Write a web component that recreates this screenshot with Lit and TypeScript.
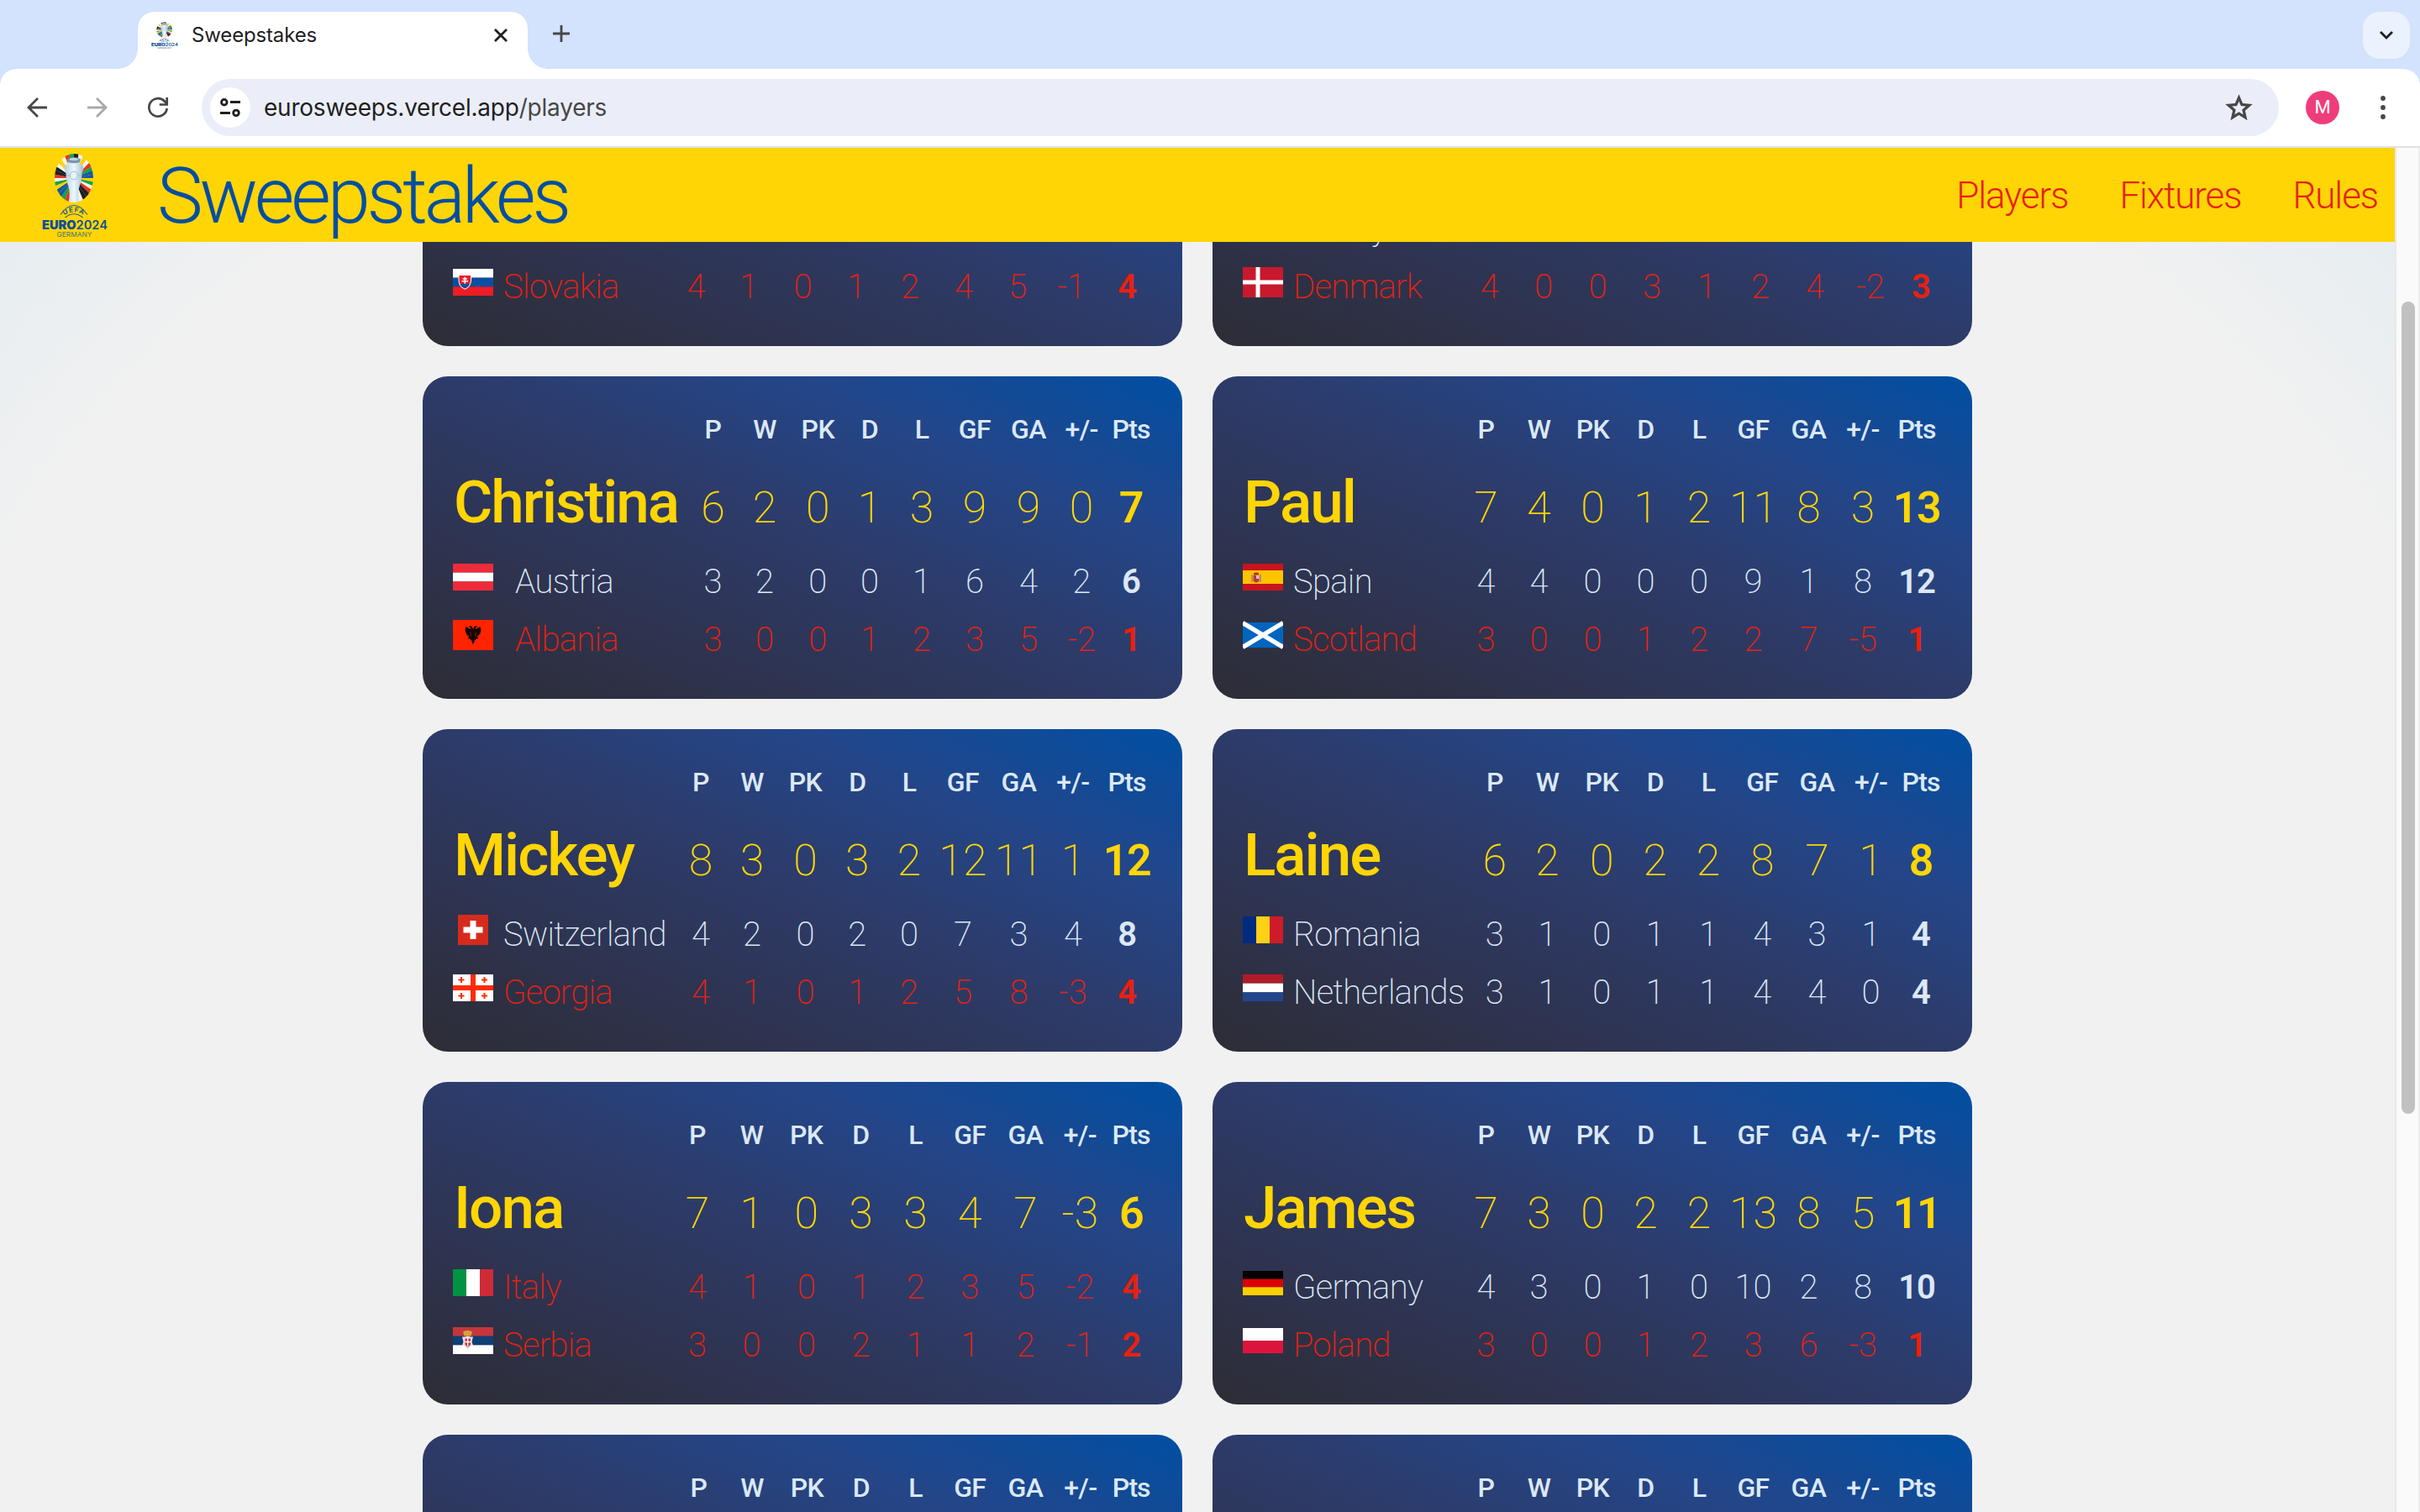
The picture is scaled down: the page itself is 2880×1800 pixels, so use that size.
import { LitElement, html, css, svg } from "lit";
import { customElement, property } from "lit/decorators.js";
import { classMap } from "lit/directives/class-map.js";
import { styleMap } from "lit/directives/style-map.js";

interface Team {
  name: string;
  flag: string;
  out: boolean;
  stats: string[];
}
interface Player {
  name: string;
  stats: string[];
  /** Centre of every figure column, measured from the card's left edge. */
  centers: number[];
  headings?: string[];
  teamX?: number;
  teams: Team[];
}

const HEADINGS = ["P", "W", "PK", "D", "L", "GF", "GA", "+/-", "Pts"];
const PAD = 36;

const team = (name: string, flag: string, stats: string, out = false): Team => ({
  name,
  flag,
  out,
  stats: stats ? stats.split(" ") : [],
});

const WIDE = [325.5, 388.5, 452.5, 515.5, 579, 643.5, 709.5, 774, 838];
const IONA = [327, 391.5, 456.7, 521.5, 586.5, 651.3, 717.5, 782.4, 843];

const PLAYERS: Player[] = [
  {
    name: "",
    stats: [],
    headings: [],
    centers: [325.5, 388, 452.5, 516, 580, 644, 708, 772, 838],
    teams: [team("", "", ""), team("Slovakia", "sk", "4 1 0 1 2 4 5 -1 4", true)],
  },
  {
    name: "",
    stats: [],
    headings: [],
    centers: [329.8, 394, 458.5, 523, 588, 652, 717, 783, 843],
    teams: [team("Turkey", "", ""), team("Denmark", "dk", "4 0 0 3 1 2 4 -2 3", true)],
  },
  {
    name: "Christina",
    stats: "6 2 0 1 3 9 9 0 7".split(" "),
    centers: [345.5, 407, 470.3, 532, 594, 657, 721, 784.2, 843],
    teamX: 14,
    teams: [
      team("Austria", "at", "3 2 0 0 1 6 4 2 6"),
      team("Albania", "al", "3 0 0 1 2 3 5 -2 1", true),
    ],
  },
  {
    name: "Paul",
    stats: "7 4 0 1 2 11 8 3 13".split(" "),
    centers: WIDE,
    teams: [
      team("Spain", "es", "4 4 0 0 0 9 1 8 12"),
      team("Scotland", "sco", "3 0 0 1 2 2 7 -5 1", true),
    ],
  },
  {
    name: "Mickey",
    stats: "8 3 0 3 2 12 11 1 12".split(" "),
    centers: [331, 392, 455.5, 517.3, 579, 643, 709.5, 774, 838],
    teams: [
      team("Switzerland", "ch", "4 2 0 2 0 7 3 4 8"),
      team("Georgia", "ge", "4 1 0 1 2 5 8 -3 4", true),
    ],
  },
  {
    name: "Laine",
    stats: "6 2 0 2 2 8 7 1 8".split(" "),
    centers: [335.8, 398.6, 463.3, 526.8, 590.2, 654.3, 719.5, 783.6, 843],
    teams: [
      team("Romania", "ro", "3 1 0 1 1 4 3 1 4"),
      team("Netherlands", "nl", "3 1 0 1 1 4 4 0 4"),
    ],
  },
  {
    name: "Iona",
    stats: "7 1 0 3 3 4 7 -3 6".split(" "),
    centers: IONA,
    teams: [
      team("Italy", "it", "4 1 0 1 2 3 5 -2 4", true),
      team("Serbia", "rs", "3 0 0 2 1 1 2 -1 2", true),
    ],
  },
  {
    name: "James",
    stats: "7 3 0 2 2 13 8 5 11".split(" "),
    centers: WIDE,
    teams: [
      team("Germany", "de", "4 3 0 1 0 10 2 8 10"),
      team("Poland", "pl", "3 0 0 1 2 3 6 -3 1", true),
    ],
  },
  { name: "", stats: [], centers: [328.5, 392, 457.5, 522, 586.5, 651.3, 717.5, 782.8, 843.2], teams: [] },
  { name: "", stats: [], centers: WIDE, teams: [] },
];

/** Grid tracks whose midpoints fall on the given centres. */
const tracks = (centers: number[]): string => {
  let width = 62;
  let edge = centers[0] - width / 2;
  const out = [edge - PAD];
  for (const c of centers) {
    width = 2 * (c - edge);
    out.push(width);
    edge += width;
  }
  return out.map((w) => `${w.toFixed(1)}px`).join(" ");
};

const bands = (w: number, h: number, colors: string[], vertical = false) => svg`
  ${colors.map((c, i) =>
    vertical
      ? svg`<rect x=${(w / colors.length) * i} y="0" width=${w / colors.length} height=${h} fill=${c}></rect>`
      : svg`<rect x="0" y=${(h / colors.length) * i} width=${w} height=${h / colors.length} fill=${c}></rect>`
  )}`;

const miniCross = (x: number, y: number) =>
  svg`<path d="M${x - 1} ${y - 3.5}h2v2.500h2.500v2h-2.500v2.500h-2v-2.500h-2.500v-2h2.500z" fill="#ff2b06"></path>`;

const FLAGS: Record<string, { w: number; h: number; art: unknown }> = {
  at: { w: 48, h: 32, art: bands(48, 32, ["#ee2b3b", "#fff", "#ee2b3b"]) },
  it: { w: 48, h: 32, art: bands(48, 32, ["#009344", "#fff", "#cf2b37"], true) },
  ro: { w: 48, h: 32, art: bands(48, 32, ["#012b80", "#fcd116", "#ce1b27"], true) },
  nl: { w: 48, h: 32, art: bands(48, 32, ["#ae1c28", "#fff", "#21468b"]) },
  de: { w: 48, h: 29, art: bands(48, 29, ["#000", "#dd0000", "#ffce00"]) },
  pl: { w: 48, h: 30, art: bands(48, 30, ["#fff", "#dc143c"]) },
  sk: {
    w: 48,
    h: 32,
    art: svg`${bands(48, 32, ["#fff", "#0b4ea2", "#ee1c25"])}
      <path d="M6.500 8h15.500c.3 8 0 13-7.700 16.800C6.500 21 6.200 16 6.500 8z" fill="#fff"></path>
      <path d="M7.500 8h13.500c.2 8 0 12.300-6.700 15.600C7.500 20.300 7.300 16 7.500 8z" fill="#ee1c25"></path>
      <path d="M8.800 18.500c1-1 2.200-1 3 0 1-1.800 3.600-1.800 4.800 0 .8-1 2-1 3 0-1 2.400-2.600 3.800-5.300 5.100-2.800-1.300-4.500-2.700-5.500-5.100z" fill="#0b4ea2"></path>
      <path d="M14.300 9.800v8M11.600 12h5.400M10.600 14.800h7.400" stroke="#fff" stroke-width="1.500"></path>`,
  },
  dk: {
    w: 48,
    h: 36,
    art: svg`<rect width="48" height="36" fill="#c8192e"></rect>
      <path d="M15.500 0h5v36h-5zM0 15.500h48v5H0z" fill="#fff"></path>`,
  },
  al: {
    w: 48,
    h: 36,
    art: svg`<rect width="48" height="36" fill="#ff2400"></rect>
      <path d="M24 11l-1.300-3-2.200-1-2.200 1.200 2.400.6.800 2.200-3.500-1.500-2.500-1.800-.4 3-1 1.200 1.300 1-.8 1.600 1.400.9-.6 1.900 1.900-.2-.3 2.300 2.200-1.200-.6 2.300-1 2 2.100-.6 1 1.400 1.300.7.700 2.600 1.300 2.400 1.300-2.400.7-2.600 1.300-.7 1-1.400 2.100.6-1-2-.6-2.300 2.200 1.200-.3-2.300 1.900.2-.6-1.900 1.400-.9-.8-1.600 1.300-1-1-1.200-.4-3-2.500 1.800-3.500 1.500.8-2.200 2.400-.6-2.200-1.200-2.200 1z" fill="#150703"></path>
      <path d="M20.800 14.500l.6 5M27.200 14.500l-.6 5" stroke="#a81a04" stroke-width=".8"></path>`,
  },
  es: {
    w: 48,
    h: 32,
    art: svg`<rect width="48" height="32" fill="#c8141d"></rect>
      <rect y="8" width="48" height="16" fill="#ffc400"></rect>
      <path d="M10 13h2v9h-2zM20 13h2v9h-2z" fill="#b9906a"></path>
      <path d="M12.500 14h7v5.500q0 2.500-3.500 3-3.500-.5-3.500-3z" fill="#b83a34"></path>
      <path d="M16 14h3.500v4H16z" fill="#d9c3cf"></path>
      <path d="M13 11.500q3-2 6 0v2h-6z" fill="#a5301e"></path>`,
  },
  sco: {
    w: 48,
    h: 34,
    art: svg`<rect y="2" width="48" height="30" fill="#0065bf"></rect>
      <path d="M0 2.500L48 31.500M48 2.500L0 31.500" stroke="#fff" stroke-width="5.500"></path>`,
  },
  ch: {
    w: 36,
    h: 36,
    art: svg`<rect width="36" height="36" fill="#d52b1e"></rect>
      <path d="M14.500 7h7v7.500H29.500v7h-8V29h-7v-7.500H6.500v-7h8z" fill="#fff"></path>`,
  },
  ge: {
    w: 48,
    h: 32,
    art: svg`<rect width="48" height="32" fill="#fff"></rect>
      <path d="M21 0h6v32h-6zM0 13h48v6H0z" fill="#ff2b06"></path>
      ${miniCross(10, 6.5)}${miniCross(37.5, 6.5)}${miniCross(10, 25.5)}${miniCross(37.5, 25.5)}`,
  },
  rs: {
    w: 48,
    h: 32,
    art: svg`${bands(48, 32, ["#c6363c", "#0c4076", "#fff"])}
      <path d="M12 5.500q5.500-3.500 11 0l-1.500 5h-8z" fill="#d9a13c"></path>
      <path d="M11 11.500h3l3.500-1 3.500 1h3l-1.500 6 1.500 4-3 1-3.500 4-3.500-4-3-1 1.500-4z" fill="#f0dfe2"></path>
      <path d="M14.500 13.500h6.500v7.500l-3.200 3-3.300-3z" fill="#c6363c"></path>
      <path d="M17.700 13v10M14.500 17.500h6.500" stroke="#fff" stroke-width="1.300"></path>`,
  },
};

const flag = (code: string) => {
  const f = FLAGS[code];
  return f ? html`<svg width=${f.w} height=${f.h} viewBox="0 0 ${f.w} ${f.h}">${f.art}</svg>` : "";
};

const RAYS = ["#1d1d2b", "#ffd400", "#f4f4f0", "#e3342b", "#1458a6", "#f4f4f0", "#12a351", "#e3342b", "#1d1d2b", "#1458a6", "#ffd400", "#f4f4f0", "#12a351"];

const sector = (i: number, n: number) => {
  const p = (k: number) => {
    const a = (k / n) * Math.PI * 2 - Math.PI / 2;
    return `${(38 + 60 * Math.cos(a)).toFixed(2)} ${(30 + 60 * Math.sin(a)).toFixed(2)}`;
  };
  return svg`<path d="M38 30L${p(i)}L${p(i + 1)}z" fill=${RAYS[(i * 5) % RAYS.length]}></path>`;
};

/** Tournament emblem: trophy on a ray-filled oval above the wordmark. */
const emblem = (size: string) => html`
  <svg class=${size} viewBox="0 0 78 101" preserveAspectRatio="none">
    <defs>
      <clipPath id="oval"><ellipse cx="38" cy="30" rx="23" ry="29"></ellipse></clipPath>
      <linearGradient id="silver" x1="0" x2="1">
        <stop offset="0" stop-color="#b4cfde"></stop>
        <stop offset=".5" stop-color="#eef7fb"></stop>
        <stop offset="1" stop-color="#9dbfd4"></stop>
      </linearGradient>
    </defs>
    <g clip-path="url(#oval)">
      ${Array.from({ length: 32 }, (_, i) => sector(i, 32))}
      <path d="M31 8q7-4 14 0l.5 5.500q5 1 3.500 7-1 1-1.500 3.500 0 9-3 16-2.500 8 0 19.500h-13q2.500-11.500 0-19.500-3-7-3-16-.5-2.500-1.500-3.500-1.500-6 3.500-7z" fill="url(#silver)"></path>
      <path d="M30 7.500q8-4.500 16 0l-1 3.500q-7 2.500-14 0z" fill="#6f97ae"></path>
      <path d="M32.500 7q5.500-2.500 11 0l-.5 1.500q-5 1.500-10 0z" fill="#b9d2df"></path>
      <circle cx="38" cy="27" r="4.800" fill="none" stroke="#9cc0d8" stroke-width="1"></circle>
      <path d="M28.500 27h4.500M43 27h4.500" stroke="#9cc0d8" stroke-width="1"></path>
    </g>
    <path d="M22 73.500q16-22 32 0M27.500 77q10.500-8.500 21 0" fill="none" stroke="#2a6089" stroke-width="1.200"></path>
    <path id="arc" d="M22 78q16-15 32 0" fill="none"></path>
    <text class="uefa"><textPath href="#arc" startOffset="50%" text-anchor="middle">UEFA</textPath></text>
    <text class="euro" x="39" y="90.500" text-anchor="middle" textLength="78" lengthAdjust="spacingAndGlyphs"><tspan class="heavy">EURO</tspan>2024</text>
    <text class="germany" x="38.500" y="99.800" text-anchor="middle" textLength="42" lengthAdjust="spacingAndGlyphs">GERMANY</text>
  </svg>`;

@customElement("player-card")
export class PlayerCard extends LitElement {
  @property({ attribute: false }) player!: Player;

  static styles = css`
    :host {
      display: block;
      box-sizing: border-box;
      height: 384px;
      padding: 44px 0 0 36px;
      border-radius: 30px;
      overflow: hidden;
      color: #dce8f5;
      background: linear-gradient(to bottom left, #004fa3 0%, #23468a 25%, #2d3b69 50%, #2e334f 75%, #2d2d35 100%);
      font-family: Roboto, "Liberation Sans", sans-serif;
    }
    .row {
      display: grid;
      align-items: baseline;
      white-space: nowrap;
      height: 69px;
      line-height: 69px;
      font-size: 40px;
      font-weight: 200;
    }
    .cell {
      display: flex;
      justify-content: center;
    }
    .pts {
      font-weight: 650;
      letter-spacing: -0.03em;
    }
    .head {
      height: 38px;
      line-height: 38px;
      font-size: 32px;
      font-weight: 500;
      letter-spacing: -0.6px;
    }
    .head .pts {
      font-weight: 500;
    }
    .total {
      height: 108px;
      margin: 14px 0 6px;
      line-height: 108px;
      font-size: 52px;
      color: #ffd505;
    }
    .name {
      padding-left: 1px;
      font-size: 71px;
      font-weight: 500;
      letter-spacing: -2px;
    }
    .out {
      color: #e8210f;
    }
    .team {
      display: flex;
      align-items: center;
      letter-spacing: -0.7px;
    }
    .label {
      align-self: baseline;
    }
    .slot {
      display: flex;
      flex: none;
      justify-content: center;
      width: 48px;
      margin: -11px 12px 0 0;
    }
  `;

  private figures(values: string[]) {
    return values.map(
      (v, i) => html`<span class=${classMap({ cell: true, pts: i === 8 })}>${v}</span>`
    );
  }

  render() {
    const p = this.player;
    const grid = styleMap({ gridTemplateColumns: tracks(p.centers) });
    const shift = styleMap({ paddingLeft: `${p.teamX ?? 0}px` });
    return html`
      <div class="row head" style=${grid}><span></span>${this.figures(p.headings ?? HEADINGS)}</div>
      <div class="row total" style=${grid}><span class="name">${p.name}</span>${this.figures(p.stats)}</div>
      ${p.teams.map(
        (t) => html`<div class=${classMap({ row: true, out: t.out })} style=${grid}>
          <span class="team"><span class="slot">${flag(t.flag)}</span><span class="label" style=${shift}>${t.name}</span></span>
          ${this.figures(t.stats)}
        </div>`
      )}
    `;
  }
}

@customElement("app-root")
export class AppRoot extends LitElement {
  static styles = css`
    :host {
      display: flex;
      flex-direction: column;
      width: 2880px;
      height: 1800px;
      overflow: hidden;
      background: #d3e2fd;
      font-family: Inter, "Liberation Sans", sans-serif;
    }
    .strip {
      display: flex;
      flex: none;
      align-items: flex-start;
      height: 68px;
      padding: 14px 12px 0 164px;
    }
    .tab {
      position: relative;
      display: flex;
      align-items: center;
      box-sizing: border-box;
      width: 464px;
      height: 68px;
      padding: 0 22px 12px 16px;
      border-radius: 20px 20px 0 0;
      background: #fff;
      color: #1f1f1f;
      font-size: 24px;
      letter-spacing: -0.15px;
    }
    .tab::before,
    .tab::after {
      content: "";
      position: absolute;
      bottom: 0;
      width: 24px;
      height: 24px;
    }
    .tab::before {
      left: -24px;
      background: radial-gradient(circle at 0 0, transparent 23.5px, #fff 24px);
    }
    .tab::after {
      right: -24px;
      background: radial-gradient(circle at 100% 0, transparent 23.5px, #fff 24px);
    }
    .tab-title {
      flex: 1;
      padding: 0 0 1px 16px;
    }
    .favicon {
      width: 32px;
      height: 32px;
    }
    .plus {
      margin: 12px 0 0 26px;
    }
    .menu {
      display: flex;
      align-items: center;
      justify-content: center;
      width: 56px;
      height: 56px;
      margin-left: auto;
      border-radius: 20px;
      background: #ebf2fe;
    }
    .toolbar {
      display: flex;
      flex: none;
      align-items: center;
      box-sizing: border-box;
      height: 94px;
      padding: 0 39px 0 28px;
      border-radius: 20px 20px 0 0;
      border-bottom: 2px solid #dfe2e6;
      background: #fff;
    }
    .tool {
      flex: none;
      margin-right: 40px;
    }
    .omnibox {
      display: flex;
      flex: 1;
      align-items: center;
      box-sizing: border-box;
      height: 68px;
      margin-left: -4px;
      padding: 0 28px 0 10px;
      border-radius: 34px;
      background: #ebeef8;
      color: #1f1f1f;
      font-size: 28px;
      letter-spacing: -0.22px;
    }
    .site {
      display: flex;
      align-items: center;
      justify-content: center;
      width: 48px;
      height: 48px;
      margin-right: 16px;
      border-radius: 50%;
      background: #fff;
    }
    .url {
      flex: 1;
    }
    .path {
      color: #474747;
    }
    .avatar {
      width: 40px;
      height: 40px;
      margin: 0 47px 0 32px;
      border-radius: 50%;
      background: #ee3d7b;
      color: #fff;
      font: 400 22px/40px Roboto, sans-serif;
      text-align: center;
    }
    .view {
      display: flex;
      flex: 1;
      min-height: 0;
    }
    .page {
      display: flex;
      flex-direction: column;
      width: 2850px;
      background: radial-gradient(1700px 1400px at 50% 1100px, #f1f1f1 94%, #e6edf1 110%);
    }
    .bar {
      display: flex;
      flex: none;
      align-items: center;
      box-sizing: border-box;
      height: 112px;
      padding: 0 20px 0 50px;
      background: #ffd505;
      font-family: Roboto, "Liberation Sans", sans-serif;
      font-weight: 300;
    }
    .logo {
      width: 78px;
      height: 101px;
    }
    .brand {
      flex: 1;
      padding: 4px 0 0 59px;
      color: #034ea2;
      font-size: 92px;
      line-height: 106px;
      letter-spacing: -4.1px;
    }
    .links {
      display: flex;
      gap: 61px;
      padding-top: 1px;
      color: #e8210f;
      font-size: 44px;
      letter-spacing: -1.1px;
    }
    .scroller {
      display: flex;
      flex: 1;
      flex-direction: column;
      align-items: center;
      justify-content: flex-start;
      min-height: 0;
      overflow: hidden;
    }
    .grid {
      display: grid;
      flex: none;
      grid-template-columns: 904px 904px;
      gap: 36px;
      margin-top: -260px;
    }
    .track {
      box-sizing: border-box;
      width: 30px;
      padding: 183px 6px 0;
      border-left: 2px solid #e8e8e8;
      border-right: 2px solid #ededed;
      background: #fafafa;
    }
    .thumb {
      width: 16px;
      height: 967px;
      border-radius: 8px;
      background: #c1c1c1;
    }
    .uefa {
      font: 700 8px Inter, sans-serif;
      letter-spacing: 1px;
      fill: #2a6089;
    }
    .euro {
      font: 600 14.6px Inter, sans-serif;
      fill: #0b4f9b;
    }
    .heavy {
      font-weight: 900;
    }
    .germany {
      font: 400 8px Inter, sans-serif;
      fill: #4c7474;
    }
  `;

  render() {
    return html`
      <div class="strip">
        <div class="tab">
          ${emblem("favicon")}
          <span class="tab-title">Sweepstakes</span>
          <svg width="20" height="20" viewBox="0 0 20 20"><path d="M3 3l14 14M17 3L3 17" stroke="#1f1f1f" stroke-width="2.800"></path></svg>
        </div>
        <svg class="plus" width="28" height="28" viewBox="0 0 28 28"><path d="M14 4v20M4 14h20" stroke="#474747" stroke-width="2.800"></path></svg>
        <div class="menu">
          <svg width="20" height="20" viewBox="0 0 20 20"><path d="M3 6l7 7 7-7" fill="none" stroke="#1f1f1f" stroke-width="2.800"></path></svg>
        </div>
      </div>
      <div class="toolbar">
        <svg class="tool" width="32" height="32" viewBox="0 0 32 32"><path d="M28 16H6M17 5L6 16l11 11" fill="none" stroke="#474747" stroke-width="2.800"></path></svg>
        <svg class="tool" width="32" height="32" viewBox="0 0 32 32"><path d="M4 16h22M15 5l11 11-11 11" fill="none" stroke="#a9a9a9" stroke-width="2.800"></path></svg>
        <svg class="tool" width="32" height="32" viewBox="0 0 32 32"><path d="M26.700 17a10.700 10.700 0 1 1-2.900-8.500l3 3.200M26.700 4v8.500h-9" fill="none" stroke="#474747" stroke-width="2.700"></path></svg>
        <div class="omnibox">
          <div class="site">
            <svg width="26" height="24" viewBox="0 0 26 24"><g fill="none" stroke="#1f1f1f" stroke-width="2.800"><circle cx="5.800" cy="5.700" r="3.300"></circle><path d="M13 5.500h12M1 18.500h12"></path><circle cx="20" cy="18.400" r="3.300"></circle></g></svg>
          </div>
          <span class="url">eurosweeps.vercel.app<span class="path">/players</span></span>
          <svg width="39" height="39" viewBox="0 0 24 24"><path fill="#474747" d="M12 7.130l.97 2.290.47 1.110 1.200.1 2.470.21-1.880 1.630-.91.79.27 1.180.56 2.410-2.120-1.280-1.030-.64-1.030.62-2.120 1.280.56-2.410.27-1.180-.91-.79-1.880-1.630 2.470-.21 1.200-.1.470-1.110.97-2.270M12 2L9.190 8.630 2 9.240l5.460 4.730L5.820 21 12 17.270 18.180 21l-1.640-7.030L22 9.240l-7.190-.61z"></path></svg>
        </div>
        <div class="avatar">M</div>
        <svg width="10" height="32" viewBox="0 0 10 32"><g fill="#474747"><circle cx="5" cy="5" r="2.900"></circle><circle cx="5" cy="16" r="2.900"></circle><circle cx="5" cy="27" r="2.900"></circle></g></svg>
      </div>
      <div class="view">
        <div class="page">
          <div class="bar">
            ${emblem("logo")}
            <span class="brand">Sweepstakes</span>
            <div class="links"><span>Players</span><span>Fixtures</span><span>Rules</span></div>
          </div>
          <div class="scroller">
            <div class="grid">
              ${PLAYERS.map((p) => html`<player-card .player=${p}></player-card>`)}
            </div>
          </div>
        </div>
        <div class="track"><div class="thumb"></div></div>
      </div>
    `;
  }
}
